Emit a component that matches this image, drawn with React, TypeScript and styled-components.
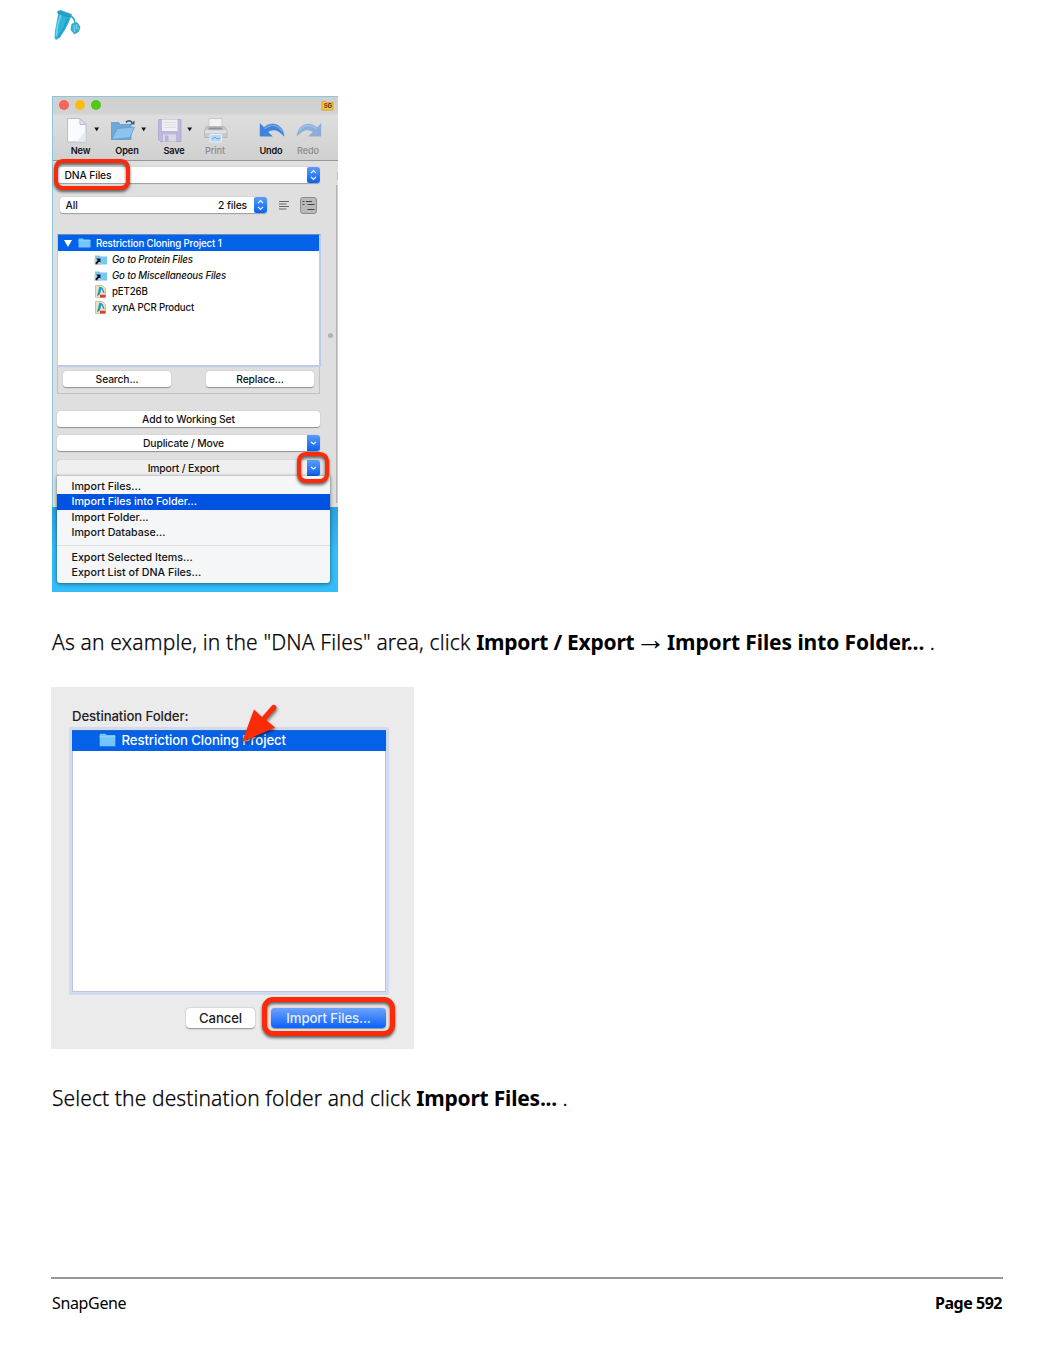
import React from "react";
import styled, { createGlobalStyle } from "styled-components";

const Global = createGlobalStyle`
  html, body { margin: 0; padding: 0; background: #fff; }
  *, *::before, *::after { box-sizing: border-box; }
  svg { display: block; }
`;

const ui = `Inter, Roboto, "Liberation Sans", sans-serif`;
const prose = `"Noto Sans", "Open Sans", sans-serif`;

const Page = styled.main`
  display: flex;
  flex-direction: column;
  width: 1054px;
  height: 1364px;
  padding: 9px 51px 0 52px;
  background: #fff;
  color: #000;
  font-family: ${prose};
  overflow: hidden;
`;
const Header = styled.header`
  height: 87px;
`;
const Paragraph = styled.p<{ $top: number }>`
  margin: ${(p) => p.$top}px 0 0;
  height: 30px;
  line-height: 30px;
  font-size: 21px;
  font-weight: 300;
  -webkit-text-stroke: 0.25px #000;
  white-space: nowrap;
`;
const Run = styled.span<{ $ls: number }>`
  letter-spacing: ${(p) => p.$ls}px;
`;
const Strong = styled.strong<{ $ls: number }>`
  font-weight: 700;
  -webkit-text-stroke: 0;
  letter-spacing: ${(p) => p.$ls}px;
`;
const To = styled.span`
  margin: 0 -4.7px;
  font-family: "Liberation Serif", serif;
  font-size: 31px;
  line-height: 0;
  -webkit-text-stroke: 0;
`;
const Footer = styled.footer`
  display: flex;
  justify-content: space-between;
  margin: auto 0 0 -1px;
  padding: 13px 1px 0;
  height: 87px;
  border-top: 2px solid #999;
  font-size: 16px;
  font-weight: 400;
  letter-spacing: -0.35px;
  line-height: 22px;
`;
const PageNo = styled.strong`
  font-weight: 700;
  letter-spacing: -0.48px;
`;

/* ---- project window ---- */
const Desktop = styled.figure`
  position: relative;
  flex: none;
  width: 286px;
  height: 496px;
  margin: 0;
  background: linear-gradient(#2b9fd8 82%, #35bdfa 92%);
  font-family: ${ui};
  font-weight: 500;
  font-size: 10.3px;
  letter-spacing: -0.13px;
  color: #111;
  overflow: hidden;
`;
const Window = styled.div`
  height: 411px;
  border: solid #86c8e0;
  border-width: 1px 0 0 1px;
  background: #dfdfdf;
`;
const Chrome = styled.div`
  height: 64px;
  background: linear-gradient(#d0d0d0, #d2d2d2 16px, #dedede 19px, #d0d0d0);
  border-bottom: 1px solid #969696;
`;
const TitleBar = styled.div`
  display: flex;
  align-items: center;
  gap: 6px;
  height: 16px;
  padding-left: 5.5px;
`;
const Light = styled.i<{ $c: string }>`
  width: 10px;
  height: 10px;
  border-radius: 50%;
  background: ${(p) => p.$c};
`;
const Badge = styled.svg`
  margin-left: auto;
  margin-right: 4px;
`;
const Tools = styled.div`
  display: flex;
  padding: 4px 0 0 4px;
`;
const Tool = styled.div<{ $w: number; $ml?: number; $off?: boolean }>`
  flex: none;
  width: ${(p) => p.$w}px;
  margin-left: ${(p) => p.$ml ?? 0}px;
  color: ${(p) => (p.$off ? "#8b8b8b" : "#111")};
  font-size: 9.2px;
  font-weight: ${(p) => (p.$off ? 500 : 600)};
  line-height: 14px;
  text-align: center;
`;
const Body = styled.div`
  display: grid;
  grid-template-columns: 263px 16px 2px;
  height: 346px;
  padding-left: 4px;
`;
const Main = styled.div`
  display: flex;
  flex-direction: column;
  padding-top: 6px;
`;
const Field = styled.div<{ $w: number }>`
  display: flex;
  align-items: center;
  justify-content: space-between;
  width: ${(p) => p.$w}px;
  height: 16px;
  padding-left: ${(p) => (p.$w > 250 ? 7.5 : 5.5)}px;
  border-radius: 3px;
  background: #fff;
  box-shadow: 0 0.5px 1px rgba(0, 0, 0, 0.3);
`;
const Stepper = styled.svg`
  margin-left: 7px;
`;
const FilterRow = styled.div`
  display: flex;
  align-items: center;
  margin: 14px 0 0 3px;
  height: 16px;
  > svg { margin-left: 11px; }
  > svg:last-child { margin-left: 10px; }
`;
const Grow = styled.span`
  flex: 1;
`;
const Tree = styled.div`
  height: 133px;
  margin: 21px -1px 0 0;
  border: 2px solid #becaea;
  border-left-width: 1px;
  border-top: 1px solid #6f87bd;
  background: #fff;
`;
const TreeRow = styled.div<{ $head?: boolean; $link?: boolean }>`
  display: flex;
  align-items: center;
  height: 16px;
  padding-left: ${(p) => (p.$head ? 5 : 36)}px;
  gap: 5px;
  background: ${(p) => (p.$head ? "#0362e8" : "transparent")};
  color: ${(p) => (p.$head ? "#fff" : "#111")};
  font-style: ${(p) => (p.$link ? "italic" : "normal")};
  font-size: 9.7px;
  letter-spacing: ${(p) => (p.$head ? -0.14 : -0.17)}px;
  white-space: nowrap;
`;
const TreeFoot = styled.div`
  display: flex;
  justify-content: space-between;
  height: 27px;
  padding: 4px 5px;
  border: 1px solid #c2c2c2;
  border-top: 0;
`;
const Push = styled.div<{ $w?: number; $mt?: number; $grey?: boolean }>`
  display: flex;
  align-items: center;
  justify-content: center;
  flex: none;
  width: ${(p) => (p.$w ? p.$w + "px" : "100%")};
  height: 16px;
  margin-top: ${(p) => p.$mt ?? 0}px;
  border-radius: 3px;
  background: ${(p) => (p.$grey ? "#efefef" : "#fff")};
  box-shadow: 0 0.5px 1px rgba(0, 0, 0, 0.35);
`;
const PushLabel = styled.span`
  flex: 1;
  padding-left: 10px;
  text-align: center;
`;
const Split = styled.div`
  display: flex;
  align-items: center;
  justify-content: center;
  padding: 3px 0 0 4px;
`;
const Grip = styled.i`
  width: 5px;
  height: 5px;
  border-radius: 50%;
  background: #b2b2b2;
`;
const Edge = styled.div`
  display: flex;
  flex-direction: column;
  padding-top: 11px;
  gap: 5px;
  &::before {
    content: "";
    width: 1px;
    height: 8px;
    margin-left: 1px;
    background: #9fcbe2;
  }
  &::after {
    content: "";
    width: 2px;
    height: 318px;
    background: linear-gradient(90deg, #b3b3b3 50%, #cfcfcf 50%);
  }
`;
const Menu = styled.div`
  position: absolute;
  left: 5px;
  top: 380px;
  width: 273px;
  height: 107px;
  padding-top: 3px;
  border-radius: 0 0 3px 3px;
  background: #f4f6f7;
  box-shadow: 0 1px 4px rgba(0, 0, 0, 0.45), 0 0 1px rgba(0, 0, 0, 0.5);
`;
const MenuItem = styled.div<{ $on?: boolean }>`
  height: 15.4px;
  padding-left: 14.5px;
  line-height: 15.4px;
  font-size: 10.7px;
  letter-spacing: -0.02px;
  background: ${(p) => (p.$on ? "#0052e2" : "transparent")};
  color: ${(p) => (p.$on ? "#fff" : "#111")};
  white-space: nowrap;
`;
const Rule = styled.div`
  height: 1px;
  margin: 4px 0 4px;
  background: #dcdedf;
`;
const Callout = styled.div<{ $x: number; $y: number; $w: number; $h: number; $b: number }>`
  position: absolute;
  left: ${(p) => p.$x}px;
  top: ${(p) => p.$y}px;
  width: ${(p) => p.$w}px;
  height: ${(p) => p.$h}px;
  border: ${(p) => p.$b}px solid #fb2a08;
  border-radius: ${(p) => p.$b * 2.2}px;
  filter: drop-shadow(0 2px 1.5px rgba(0, 0, 0, 0.6));
`;

/* ---- destination dialog ---- */
const Dialog = styled.figure`
  position: relative;
  display: flex;
  flex-direction: column;
  flex: none;
  width: 363px;
  height: 362px;
  margin: 30px 0 0 -1px;
  padding: 20px 25px 0 18px;
  background: #ebebeb;
  font-family: ${ui};
  font-size: 13.2px;
  font-weight: 500;
  letter-spacing: -0.11px;
  color: #222;
`;
const DialogLabel = styled.div`
  height: 20px;
  padding-left: 3px;
  line-height: 18px;
`;
const FolderList = styled.div`
  height: 268px;
  border: 3px solid #d0daf0;
  border-radius: 2px;
  background: #fff;
  box-shadow: inset 0 0 0 1px #b9c5de;
`;
const FolderRow = styled.div`
  display: flex;
  align-items: center;
  gap: 6px;
  height: 21px;
  padding: 0 0 1px 26.5px;
  background: #0362e8;
  box-shadow: inset 0 1px #3465b4;
  color: #fff;
`;
const Actions = styled.div`
  display: flex;
  justify-content: flex-end;
  gap: 16px;
  padding: 13px 3px 0 0;
`;
const DialogButton = styled.div<{ $w: number; $primary?: boolean }>`
  width: ${(p) => p.$w}px;
  height: 20px;
  border-radius: 4px;
  line-height: 20px;
  text-align: center;
  color: ${(p) => (p.$primary ? "#e6eeff" : "#222")};
  background: ${(p) => (p.$primary ? "linear-gradient(#6da3fb, #0a62fb)" : "#fff")};
  box-shadow: 0 0.5px 1.5px rgba(0, 0, 0, 0.4);
`;
const Arrow = styled.svg`
  position: absolute;
  left: 189px;
  top: 14px;
  filter: drop-shadow(1px 2px 1.5px rgba(0, 0, 0, 0.5));
`;

const Logo = () => (
  <svg width="30" height="32" viewBox="0 0 30 32">
    <path d="M6.500 3L19 7.500 17 13 13.500 20 8 28.500 4 31 2.500 29 3 22 5 11z" fill="#30b4da" />
    <path d="M9 6L5.500 16 4.500 27" stroke="#6fd2ec" strokeWidth="1.800" fill="none" />
    <path d="M16 9L12 19 6.500 28" stroke="#1d94bb" strokeWidth="1.200" fill="none" />
    <path d="M6 2L9 1.500 19.500 5.500 19 8 12 7 5.500 4z" fill="#2a9fc5" stroke="#1687ad" strokeWidth=".5" />
    <path d="M18.500 7.500C22 8 22.500 10.500 23 14" stroke="#2fa9cb" strokeWidth="1.400" fill="none" />
    <path d="M20 15L25 13.500 28 18 26.500 22.500 22.500 25 19 21z" fill="#36b4d6" stroke="#1c91b5" strokeWidth=".7" />
    <path d="M22 16l.5 7M25 15l-1 4 3 .5" stroke="#7fd8eb" fill="none" />
  </svg>
);
const caret = <path d="M37.300 10.500h4.800l-2.400 3.700z" fill="#111" />;
const NewIcon = () => (
  <svg width="47" height="27">
    <path d="M10.500 1.500h12.500l6 6v17.500H10.500z" fill="#f9fafd" stroke="#b7bdc9" />
    <path d="M23 1.500v6h6z" fill="#dce3ef" stroke="#b7bdc9" />
    <path d="M20 24.500L28.500 14v10.500z" fill="#e5ebf5" />
    {caret}
  </svg>
);
const OpenIcon = () => (
  <svg width="46" height="27">
    <path d="M7.500 5.500h7l2 2h10.500v15h-19.500z" fill="#6ea9d8" stroke="#5d9bcd" strokeWidth=".8" />
    <path d="M8 22.500L13 11.500l17.500-1.500L26 20.500z" fill="#8fc3ee" stroke="#5a9cd2" strokeWidth=".8" />
    <path d="M22 5.500c1.500-2.500 4.500-2.500 6 0" fill="none" stroke="#34597e" strokeWidth="1.500" />
    <path d="M25.800 7.500h4.700v-4z" fill="#34597e" />
    {caret}
  </svg>
);
const SaveIcon = () => (
  <svg width="48" height="27">
    <path d="M8.500 2.500h22.500v22h-20.500l-2-2z" fill="#bcb7dc" stroke="#aca6d0" strokeWidth=".8" />
    <path d="M12 2.500h15.500v11.500H12z" fill="#f0f0f3" />
    <path d="M13.500 5.500h12.500M13.500 8h12.500M13.500 10.500h12.500" stroke="#dcdce2" />
    <path d="M13 17.500h13v7H13z" fill="#dad9e2" />
    <path d="M15 18.500h3.500v6H15z" fill="#b5b0d4" />
    {caret}
  </svg>
);
const PrintIcon = () => (
  <svg width="34" height="27">
    <path d="M11 1.500h13v9H11z" fill="#f2f2f3" stroke="#c9cbce" />
    <path d="M8.500 9.500h18l2.500 4v7H6.500v-7z" fill="#c6c9cd" stroke="#b0b3b8" strokeWidth=".8" />
    <path d="M7 13.500h21.500v2.500H7z" fill="#e0e2e5" />
    <path d="M10.500 10.500h14v2h-14z" fill="#8d9299" />
    <path d="M12 17.500h11.500v7.500H12z" fill="#b9d7f3" stroke="#e9f2fa" />
    <path d="M14 22l3-2 2 2 3-1" fill="none" stroke="#6fa5dc" />
  </svg>
);
const TurnIcon = ({ redo }: { redo?: boolean }) => (
  <svg width="36" height="27" viewBox="0 0 36 27">
    <g transform={redo ? "translate(38 0) scale(-1 1)" : undefined} opacity={redo ? 0.5 : 1}>
      <path d="M7 6.500v12.700h12.300l-4.300-4.200c5-3.500 10-2.500 16 4.200C30.500 8 19.500 3 11 10.500z" fill="#3f84dc" stroke="#3978cd" strokeWidth=".4" />
      <path d="M11.500 11.700C18 6.500 25.500 8 29 14.500" fill="none" stroke="#75aaeb" strokeWidth="1.200" />
    </g>
  </svg>
);
const Steps = ({ down }: { down?: boolean }) => (
  <Stepper width="13" height="16" viewBox="0 0 13 16">
    <defs>
      <linearGradient id="blue" x1="0" y1="0" x2="0" y2="1">
        <stop offset="0" stopColor="#5c9bf8" />
        <stop offset="1" stopColor="#0762f4" />
      </linearGradient>
    </defs>
    <path d={down ? "M0 0h10q3 0 3 3v10q0 3-3 3H0z" : "M2 0h8q3 0 3 3v10q0 3-3 3H2q-2 0-2-2V2q0-2 2-2z"} fill="url(#blue)" />
    <path
      d={down ? "M4 7l2.500 2L9 7" : "M4 6.200L6.500 3.700 9 6.200M4 9.800l2.500 2.500L9 9.800"}
      fill="none" stroke="#fff" strokeWidth="1.200"
    />
  </Stepper>
);
const FolderIcon = ({ w, h }: { w: number; h: number }) => (
  <svg width={w} height={h} viewBox="0 0 13 10" preserveAspectRatio="none">
    <path d="M.5 1.200q0-.7.7-.7h3.600l1 1h6q.7 0 .7.700V9.500H.5z" fill="#74c6fa" />
    <path d="M.5 2.700h12" stroke="#a1dcff" strokeWidth=".6" />
  </svg>
);
const LinkIcon = () => (
  <svg width="13" height="11">
    <path d="M1 1.500h4.500l1 1H13V10.500H1z" fill="#77c7f7" />
    <path d="M.5 4h6.500v7H.5z" fill="#a9d4ee" />
    <path d="M2 4.500h4.500v4.300L5.200 7.600 2.600 10.500 1.200 9.300 3.700 6.200z" fill="#111" />
  </svg>
);
const FileIcon = () => (
  <svg width="13" height="13">
    <path d="M1.500.5h7l3 3v9h-10z" fill="#e9e1bd" stroke="#b9b294" strokeWidth=".7" />
    <path d="M5.500 1.500l2.500 1-2.500 7.500-2.500 1z" fill="#169bc6" />
    <path d="M8 3l2 5" stroke="#169bc6" strokeWidth="1.200" />
    <path d="M6 9.800h5.500v2.700H6z" fill="#dc3f32" />
  </svg>
);

export default function App() {
  return (
    <>
      <Global />
      <Page>
        <Header><Logo /></Header>

        <Desktop>
          <Window>
            <Chrome>
              <TitleBar>
                <Light $c="#f5655b" /><Light $c="#fbbd0b" /><Light $c="#50c814" />
                <Badge width="13" height="11" viewBox="0 0 14 11">
                  <path d="M1 1h4.500l1 1.200H13V10.500H1z" fill="#f4c93d" stroke="#c99b20" strokeWidth=".7" />
                  <text x="3" y="8.700" fontFamily="Inter, sans-serif" fontSize="6.500" fontWeight="800" fill="#a9342c">S</text>
                  <text x="7" y="8.700" fontFamily="Inter, sans-serif" fontSize="6.500" fontWeight="800" fill="#473b2f">G</text>
                </Badge>
              </TitleBar>
              <Tools>
                <Tool $w={47}><NewIcon />New</Tool>
                <Tool $w={46}><OpenIcon />Open</Tool>
                <Tool $w={48}><SaveIcon />Save</Tool>
                <Tool $w={34} $off><PrintIcon />Print</Tool>
                <Tool $w={36} $ml={21}><TurnIcon />Undo</Tool>
                <Tool $w={36} $ml={1} $off><TurnIcon redo />Redo</Tool>
              </Tools>
            </Chrome>
            <Body>
              <Main>
                <Field $w={263}><span>DNA Files</span><Steps /></Field>
                <FilterRow>
                  <Field $w={207}>
                    <Grow>All</Grow><span>2 files</span><Steps />
                  </Field>
                  <svg width="12" height="11">
                    <path d="M1 1.500h10M1 4h7.500M1 6.500h10M1 9h7.500" stroke="#666" />
                  </svg>
                  <svg width="17" height="17">
                    <rect x=".5" y=".5" width="16" height="16" rx="2.500" fill="#b9b9b9" stroke="#8d8d8d" />
                    <path d="M2.500 4.500h2M6 4.500h6M2.500 7.500h2M7.500 7.500h7M7.500 12.500h7" stroke="#444" />
                  </svg>
                </FilterRow>
                <Tree>
                  <TreeRow $head>
                    <svg width="10" height="9"><path d="M1 1h8L5 8z" fill="#fff" /></svg>
                    <FolderIcon w={13} h={10} />
                    Restriction Cloning Project 1
                  </TreeRow>
                  <TreeRow $link><LinkIcon />Go to Protein Files</TreeRow>
                  <TreeRow $link><LinkIcon />Go to Miscellaneous Files</TreeRow>
                  <TreeRow><FileIcon />pET26B</TreeRow>
                  <TreeRow><FileIcon />xynA PCR Product</TreeRow>
                </Tree>
                <TreeFoot>
                  <Push $w={108}>Search...</Push>
                  <Push $w={108}>Replace...</Push>
                </TreeFoot>
                <Push $mt={17}>Add to Working Set</Push>
                <Push $mt={8}><PushLabel>Duplicate / Move</PushLabel><Steps down /></Push>
                <Push $mt={9} $grey><PushLabel>Import / Export</PushLabel><Steps down /></Push>
              </Main>
              <Split><Grip /></Split>
              <Edge />
            </Body>
          </Window>
          <Menu>
            <MenuItem>Import Files...</MenuItem>
            <MenuItem $on>Import Files into Folder...</MenuItem>
            <MenuItem>Import Folder...</MenuItem>
            <MenuItem>Import Database...</MenuItem>
            <Rule />
            <MenuItem>Export Selected Items...</MenuItem>
            <MenuItem>Export List of DNA Files...</MenuItem>
          </Menu>
          <Callout $x={2} $y={63} $w={76} $h={31} $b={4} />
          <Callout $x={245} $y={356} $w={32} $h={31} $b={4} />
        </Desktop>

        <Paragraph $top={35}>
          <Run $ls={0.16}>As an example, in the "DNA Files" area, click </Run>
          <Strong $ls={-0.25}>Import / Export</Strong> <To>→</To> <Strong $ls={-0.09}>Import Files into Folder...</Strong> .
        </Paragraph>

        <Dialog>
          <DialogLabel>Destination Folder:</DialogLabel>
          <FolderList>
            <FolderRow><FolderIcon w={17} h={14} />Restriction Cloning Project</FolderRow>
          </FolderList>
          <Actions>
            <DialogButton $w={69}>Cancel</DialogButton>
            <DialogButton $w={115} $primary>Import Files...</DialogButton>
          </Actions>
          <Callout $x={211} $y={310} $w={133} $h={39} $b={5} />
          <Arrow width="42" height="44" viewBox="0 0 42 44">
            <path d="M2 41L14 8.500l8 7.500L31.500 5q2-2 4-.5t0 4L26 19l9 7.500z" fill="#fc2b06" />
          </Arrow>
        </Dialog>

        <Paragraph $top={34}>
          <Run $ls={0.1}>Select the destination folder and click </Run>
          <Strong $ls={-0.2}>Import Files...</Strong> .
        </Paragraph>

        <Footer><span>SnapGene</span><PageNo>Page 592</PageNo></Footer>
      </Page>
    </>
  );
}
